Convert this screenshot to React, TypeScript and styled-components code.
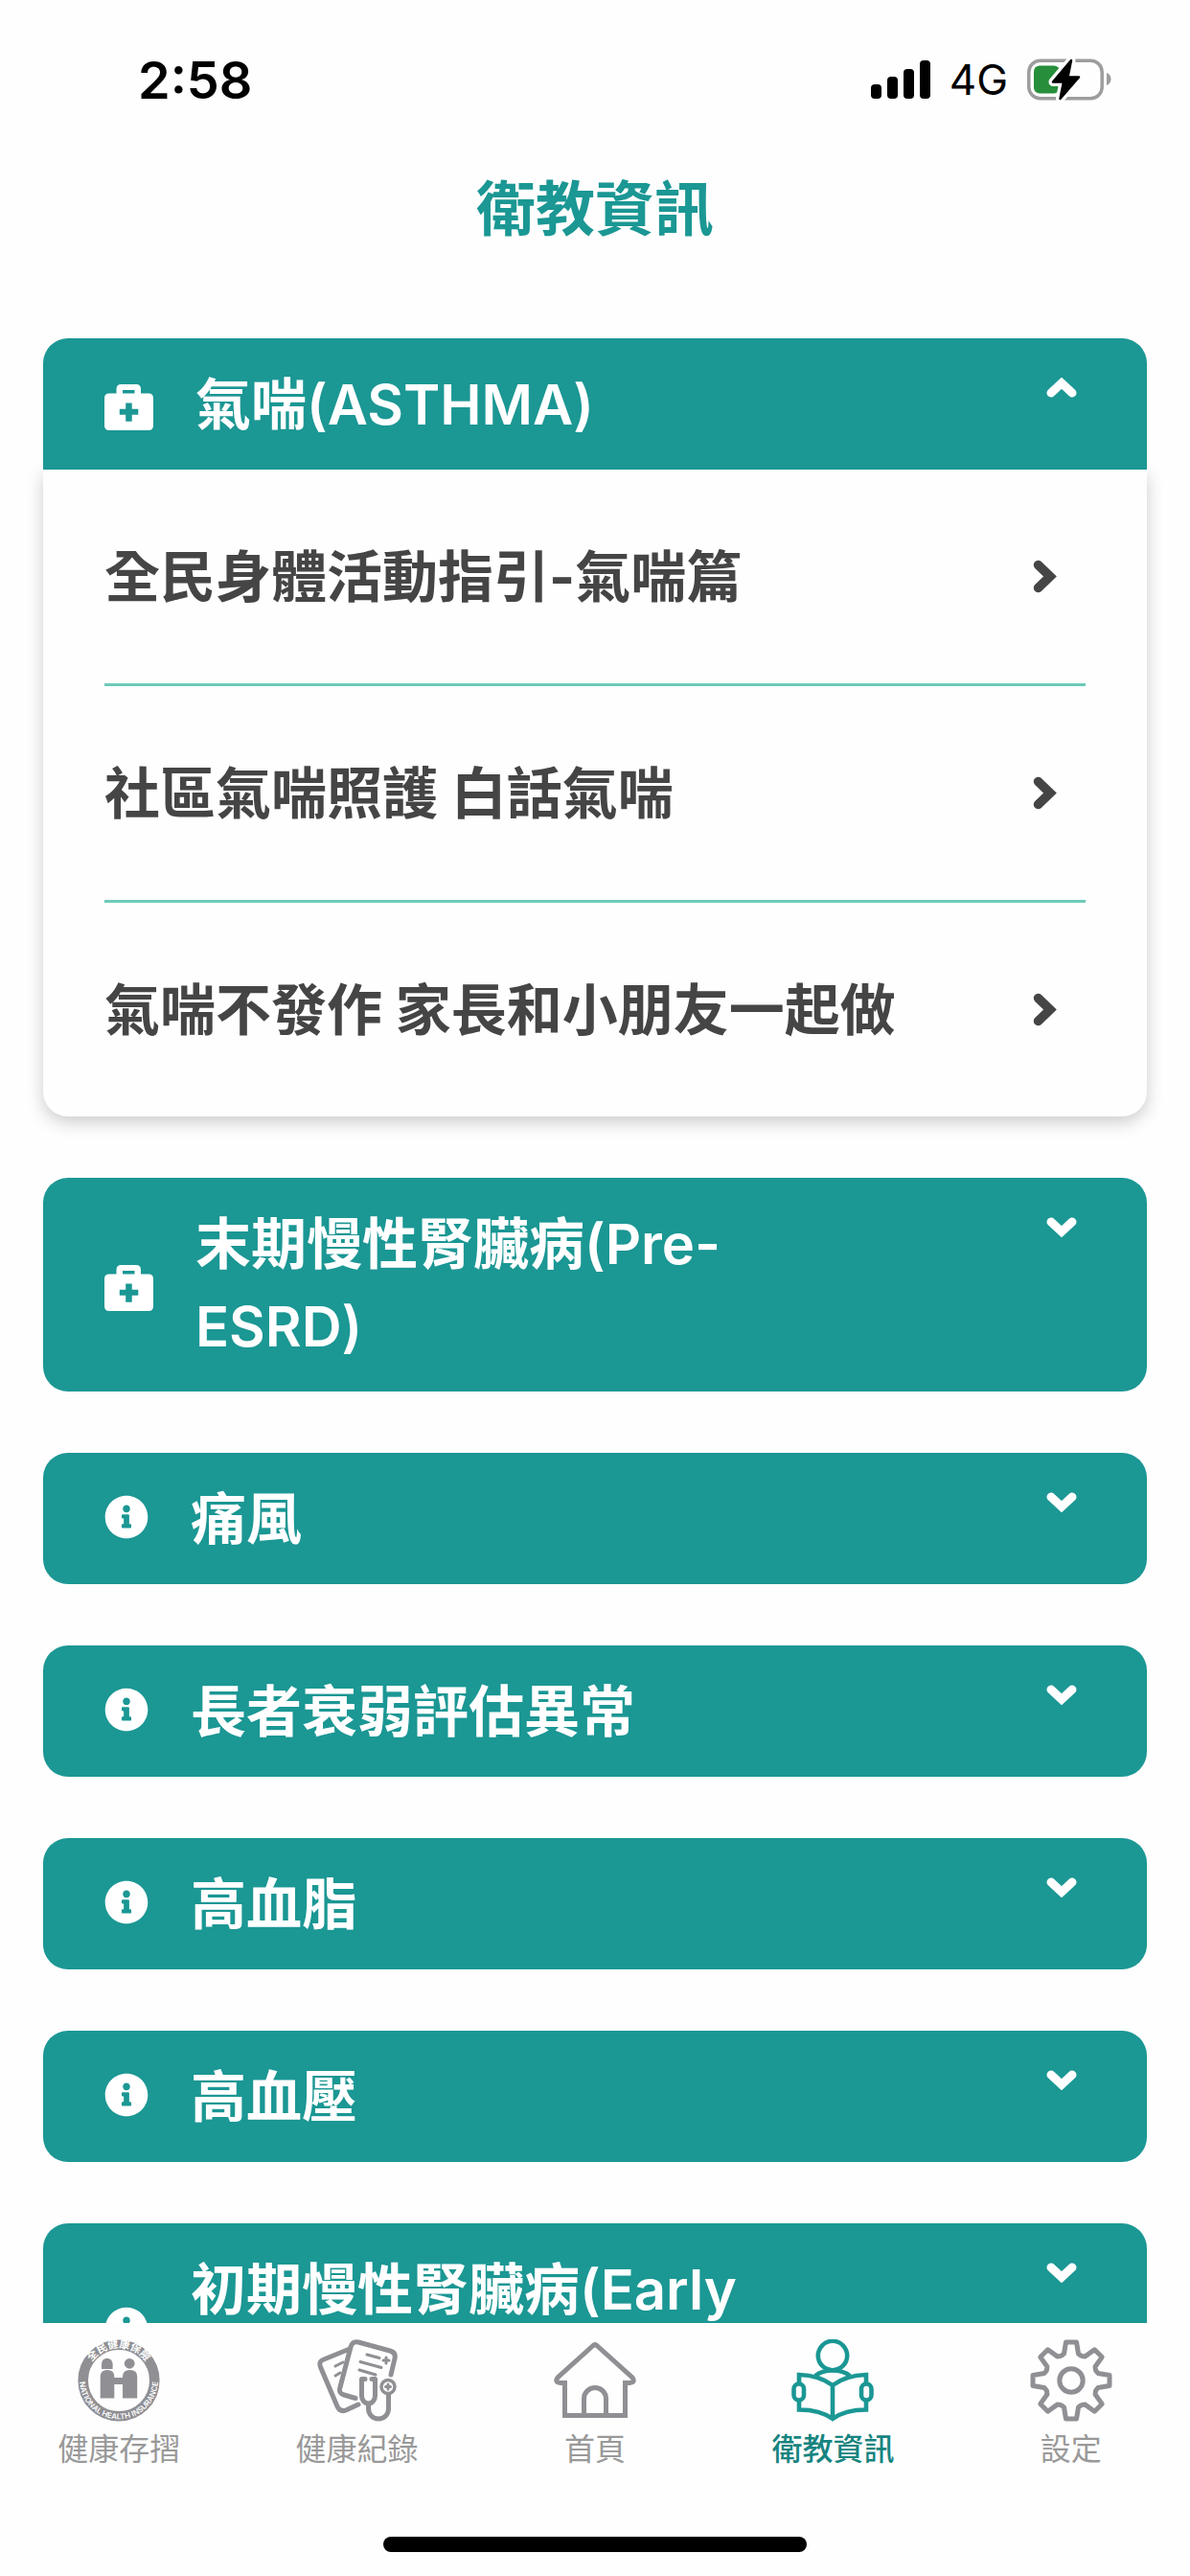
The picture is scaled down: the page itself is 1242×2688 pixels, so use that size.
import React, { useState } from 'react';
import styled, { createGlobalStyle } from 'styled-components';
import { FaInfoCircle } from 'react-icons/fa';

const teal = '#1b9794';
const ink = '#454545';
const muted = '#8f8f94';
const latin = 'Inter, "Noto Sans CJK TC", sans-serif';

const GlobalStyle = createGlobalStyle`
  *, *::before, *::after { box-sizing: border-box; }
  body { margin: 0; background: #fefefe; font-family: ${latin}; }
  button { font: inherit; color: inherit; border: 0; background: none; padding: 0; cursor: pointer; }
  a { color: inherit; text-decoration: none; }
  h1, h2, ul { margin: 0; padding: 0; font: inherit; }
  ul { list-style: none; }
  svg { display: block; flex: none; }
`;

const Screen = styled.div`
  display: flex;
  flex-direction: column;
  height: 100vh;
  background: #fefefe;
`;

const StatusBar = styled.header`
  display: flex;
  align-items: center;
  justify-content: space-between;
  flex: none;
  height: 166px;
  padding: 0 82px 0 144px;
  color: #000;
`;

const Clock = styled.time`
  font-size: 54px;
  font-weight: 600;
`;

const Indicators = styled.div`
  display: flex;
  align-items: center;
  gap: 20px;
`;

const Network = styled.span`
  font-size: 44px;
`;

const PageTitle = styled.h1`
  && {
    flex: none;
    color: ${teal};
    font-size: 62px;
    font-weight: 600;
    line-height: 106px;
    text-align: center;
  }
`;

const Content = styled.main`
  display: flex;
  flex-direction: column;
  flex: 1;
  gap: 64px;
  min-height: 0;
  margin-top: 81px;
  padding: 0 45px;
  overflow: hidden auto;
  scrollbar-width: none;
`;

const Card = styled.section`
  flex: none;
`;

const CardHeading = styled.h2`
  display: flex;
`;

const CardHeader = styled.button<{ $open: boolean }>`
  && {
    position: relative;
    z-index: 1;
    display: flex;
    align-items: center;
    flex: 1;
    padding: 26px 73px 25px 64px;
    border-radius: ${p => (p.$open ? '26px 26px 0 0' : '26px')};
    background: ${teal};
    color: #fff;
    font-size: 58px;
    font-weight: 600;
    line-height: 86px;
    text-align: left;
  }
`;

const InfoIcon = styled(FaInfoCircle)`
  margin-bottom: 4px;
`;

const CardLabel = styled.span`
  flex: 0 1 614px;
  margin: 0 auto 0 44px;
`;

const ToggleMark = styled.span`
  align-self: flex-start;
  padding-top: 15px;
`;

const ArticleList = styled.ul`
  && {
    padding: 0 64px;
    border-radius: 0 0 26px 26px;
    box-shadow: 0 6px 18px rgba(0, 0, 0, 0.2);
  }
`;

const ArticleItem = styled.li`
  & + & { border-top: 3px solid #6dcab8; }
`;

const ArticleLink = styled.a`
  display: flex;
  align-items: center;
  justify-content: space-between;
  height: 223px;
  padding-right: 30px;
  color: ${ink};
  font-size: 58px;
  font-weight: 700;
  line-height: 86px;
`;

const TabBar = styled.nav`
  display: grid;
  grid-template-columns: repeat(5, 1fr);
  flex: none;
  padding: 17px 0 68px;
`;

const Tab = styled.a<{ $active?: boolean }>`
  display: flex;
  flex-direction: column;
  align-items: center;
  gap: 6px;
  color: ${p => (p.$active ? teal : muted)};
`;

const TabLabel = styled.span<{ $active?: boolean }>`
  color: ${p => (p.$active ? '#178480' : '#999')};
  font-size: 32px;
  font-weight: ${p => (p.$active ? 500 : 400)};
  line-height: 46px;
`;

const HomeIndicator = styled.div`
  flex: none;
  align-self: center;
  width: 442px;
  height: 16px;
  margin-bottom: 25px;
  border-radius: 8px;
  background: #000;
`;

const SignalIcon = () => (
  <svg width="62" height="40" viewBox="0 0 62 40" fill="#000" role="img" aria-label="signal">
    <rect x="0" y="25" width="11" height="15" rx="4" />
    <rect x="17" y="17" width="11" height="23" rx="4" />
    <rect x="34" y="9" width="11" height="31" rx="4" />
    <rect x="51" y="0" width="11" height="40" rx="4" />
  </svg>
);

const BatteryIcon = () => (
  <svg width="88" height="44" viewBox="0 0 88 44" role="img" aria-label="charging">
    <rect x="1.8" y="2.3" width="76.4" height="39.4" rx="12" fill="#fefefe" stroke="#9d9d9d" strokeWidth="3.5" />
    <path d="M83 15c6 2 6 11 0 13z" fill="#9d9d9d" />
    <rect x="7" y="7.5" width="27" height="29" rx="6" fill="#278f3b" />
    <path d="M46 2 27 24.5H38L34.5 42 54 19.5H42.5z" fill="#fefefe" stroke="#fefefe" strokeWidth="9" strokeLinejoin="round" />
    <path d="M46 2 27 24.5H38L34.5 42 54 19.5H42.5z" fill="#000" stroke="#000" strokeWidth="2.5" strokeLinejoin="round" />
  </svg>
);

const MedkitIcon = () => (
  <svg width="51" height="54" viewBox="0 0 51 54" aria-hidden="true">
    <path
      fill="#fff"
      fillRule="evenodd"
      d="M17.5 6h15.500q5 0 5 5v4.500H46q5 0 5 5V49q0 5-5 5H5q-5 0-5-5V20.500q0-5 5-5h7.500V11q0-5 5-5zM19 12v3.500h12.500V12zM22.200 25.500v6.200h-6.400v6h6.400v7h6.500v-7h6.600v-6h-6.600v-6.200z"
    />
  </svg>
);

const ToggleIcon = ({ up }: { up: boolean }) => (
  <svg width="32" height="21" viewBox="0 0 32 21" fill="none" stroke="#fff" strokeWidth="9" strokeLinecap="round" aria-hidden="true">
    <path d={up ? 'M5 16 16 5.8 27 16' : 'M5 5 16 15.2 27 5'} />
  </svg>
);

const GoIcon = () => (
  <svg width="25" height="35" viewBox="0 0 25 35" fill="none" stroke={ink} strokeWidth="9.5" strokeLinecap="round" aria-hidden="true">
    <path d="M5.5 5.500 18 17.500 5.500 29.500" />
  </svg>
);

const SealIcon = () => (
  <svg width="86" height="86" viewBox="0 0 86 86" fill={muted} aria-hidden="true">
    <defs>
      <path id="seal-top" d="M9 43a34 34 0 0 1 68 0" />
      <path id="seal-bottom" d="M2.500 36a41 41 0 1 0 81 0" />
    </defs>
    <circle cx="43" cy="43" r="37.3" fill="none" stroke={muted} strokeWidth="10.6" />
    <text fill="#fefefe" fontSize="11" fontWeight="600" textAnchor="middle" fontFamily={latin}>
      <textPath href="#seal-top" startOffset="50%">全民健康保險</textPath>
    </text>
    <text fill="#fefefe" fontSize="8" fontWeight="600" textAnchor="middle" fontFamily={latin}>
      <textPath href="#seal-bottom" startOffset="50%">NATIONAL HEALTH INSURANCE</textPath>
    </text>
    <path d="M25 31v-5.500a5.800 5.800 0 0 1 11.600 0V31z" />
    <circle cx="54.2" cy="25.3" r="5.4" />
    <path d="M23.700 61.500V39q0-7 7.300-7t7.300 7v1H47v-1q0-7 7.600-7t7.600 7v22.500H47V47h-8.700v14.500z" />
  </svg>
);

const RecordsIcon = () => (
  <svg width="86" height="86" viewBox="0 0 86 86" fill="none" stroke={muted} strokeWidth="5" strokeLinecap="round" strokeLinejoin="round" aria-hidden="true">
    <path d="M35 10 8 21Q2 23 4.500 29L22 70q3 6.500 9 4l13-6" />
    <path d="M20 28l8-4M20 38l5-3" strokeWidth="3" />
    <path d="M41 61.500 29 58q-6-1.500-4-8L36 8q2-6.500 8-5l33 9q6.500 2 5 8l-4 17" />
    <path d="M53 16l13 3.500M46 23.500l22 6M45 32l17 5M73 19v6M70 22h6" strokeWidth="3" />
    <path d="M51 41.500h-3.500V59a7 8 0 0 0 14 0V41.500H58" />
    <path d="M54.500 68v4.500a10.500 10.500 0 0 0 21 0V58" />
    <circle cx="75" cy="49.5" r="7" strokeWidth="3.5" fill="#fefefe" />
    <path d="M75 47v5M72.500 49.500h5" strokeWidth="3" />
  </svg>
);

const HouseIcon = () => (
  <svg width="86" height="86" viewBox="0 0 86 86" fill="none" stroke={muted} strokeWidth="5" aria-hidden="true">
    <path d="M40.500 7Q43 4.500 45.500 7L82 40q3.500 5-3 5.500h-4.500v34h-63v-34H7Q.5 45 4 40z" />
    <path d="M31.500 79.500V62a11.500 11.500 0 0 1 23 0v17.500" />
  </svg>
);

const ReaderIcon = () => (
  <svg width="86" height="86" viewBox="0 0 86 86" fill="none" stroke={teal} strokeWidth="4.6" aria-hidden="true">
    <circle cx="43" cy="17" r="15.2" />
    <path d="M25 38q7-5.500 18-5.500T61 38" />
    <path d="M43 48Q29 37.500 8 37v36.500q22 0 35 9.500 13-9.500 35-9.500V37q-21 .5-35 11zv35" fill="#fefefe" />
    <rect x="2.5" y="46.5" width="10.5" height="17" rx="5.25" fill="#fefefe" />
    <rect x="73" y="46.5" width="10.5" height="17" rx="5.25" fill="#fefefe" />
  </svg>
);

// Outline of one tooth, repeated around the hub every 45 degrees.
const tooth: [number, number][] = [[-10, -26], [-7.5, -28], [-5.5, -40], [5.5, -40], [7.5, -28], [10, -26]];
const gearPath =
  'M' +
  Array.from({ length: 8 }, (_, i) => {
    const a = (i * Math.PI) / 4;
    return tooth
      .map(([x, y]) => `${(43 + x * Math.cos(a) - y * Math.sin(a)).toFixed(2)} ${(43 + x * Math.sin(a) + y * Math.cos(a)).toFixed(2)}`)
      .join('L');
  }).join('L') +
  'Z';

const GearIcon = () => (
  <svg width="86" height="86" viewBox="0 0 86 86" fill="none" stroke={muted} strokeWidth="5" strokeLinejoin="round" aria-hidden="true">
    <path d={gearPath} />
    <circle cx="43" cy="43" r="12.2" />
  </svg>
);

type Topic = { title: string; kind: 'kit' | 'info'; articles: string[] };

const topics: Topic[] = [
  {
    title: '氣喘(ASTHMA)',
    kind: 'kit',
    articles: ['全民身體活動指引-氣喘篇', '社區氣喘照護 白話氣喘', '氣喘不發作 家長和小朋友一起做'],
  },
  { title: '末期慢性腎臟病(Pre-ESRD)', kind: 'kit', articles: [] },
  { title: '痛風', kind: 'info', articles: [] },
  { title: '長者衰弱評估異常', kind: 'info', articles: [] },
  { title: '高血脂', kind: 'info', articles: [] },
  { title: '高血壓', kind: 'info', articles: [] },
  { title: '初期慢性腎臟病(Early CKD)', kind: 'info', articles: [] },
];

const tabs = [
  { label: '健康存摺', Icon: SealIcon },
  { label: '健康紀錄', Icon: RecordsIcon },
  { label: '首頁', Icon: HouseIcon },
  { label: '衛教資訊', Icon: ReaderIcon, active: true },
  { label: '設定', Icon: GearIcon },
];

export default function App() {
  const [openIndex, setOpenIndex] = useState(0);

  return (
    <>
      <GlobalStyle />
      <Screen lang="zh-Hant">
        <StatusBar>
          <Clock>2:58</Clock>
          <Indicators>
            <SignalIcon />
            <Network>4G</Network>
            <BatteryIcon />
          </Indicators>
        </StatusBar>
        <PageTitle>衛教資訊</PageTitle>
        <Content>
          {topics.map((topic, i) => {
            const open = i === openIndex;
            return (
              <Card key={topic.title}>
                <CardHeading>
                  <CardHeader $open={open} aria-expanded={open} onClick={() => setOpenIndex(open ? -1 : i)}>
                    {topic.kind === 'kit' ? <MedkitIcon /> : <InfoIcon size={46} aria-hidden="true" />}
                    <CardLabel>{topic.title}</CardLabel>
                    <ToggleMark>
                      <ToggleIcon up={open} />
                    </ToggleMark>
                  </CardHeader>
                </CardHeading>
                {open && (
                  <ArticleList>
                    {topic.articles.map(article => (
                      <ArticleItem key={article}>
                        <ArticleLink href="#">
                          {article}
                          <GoIcon />
                        </ArticleLink>
                      </ArticleItem>
                    ))}
                  </ArticleList>
                )}
              </Card>
            );
          })}
        </Content>
        <TabBar>
          {tabs.map(({ label, Icon, active }) => (
            <Tab key={label} href="#" $active={active} aria-current={active ? 'page' : undefined}>
              <Icon />
              <TabLabel $active={active}>{label}</TabLabel>
            </Tab>
          ))}
        </TabBar>
        <HomeIndicator />
      </Screen>
    </>
  );
}
